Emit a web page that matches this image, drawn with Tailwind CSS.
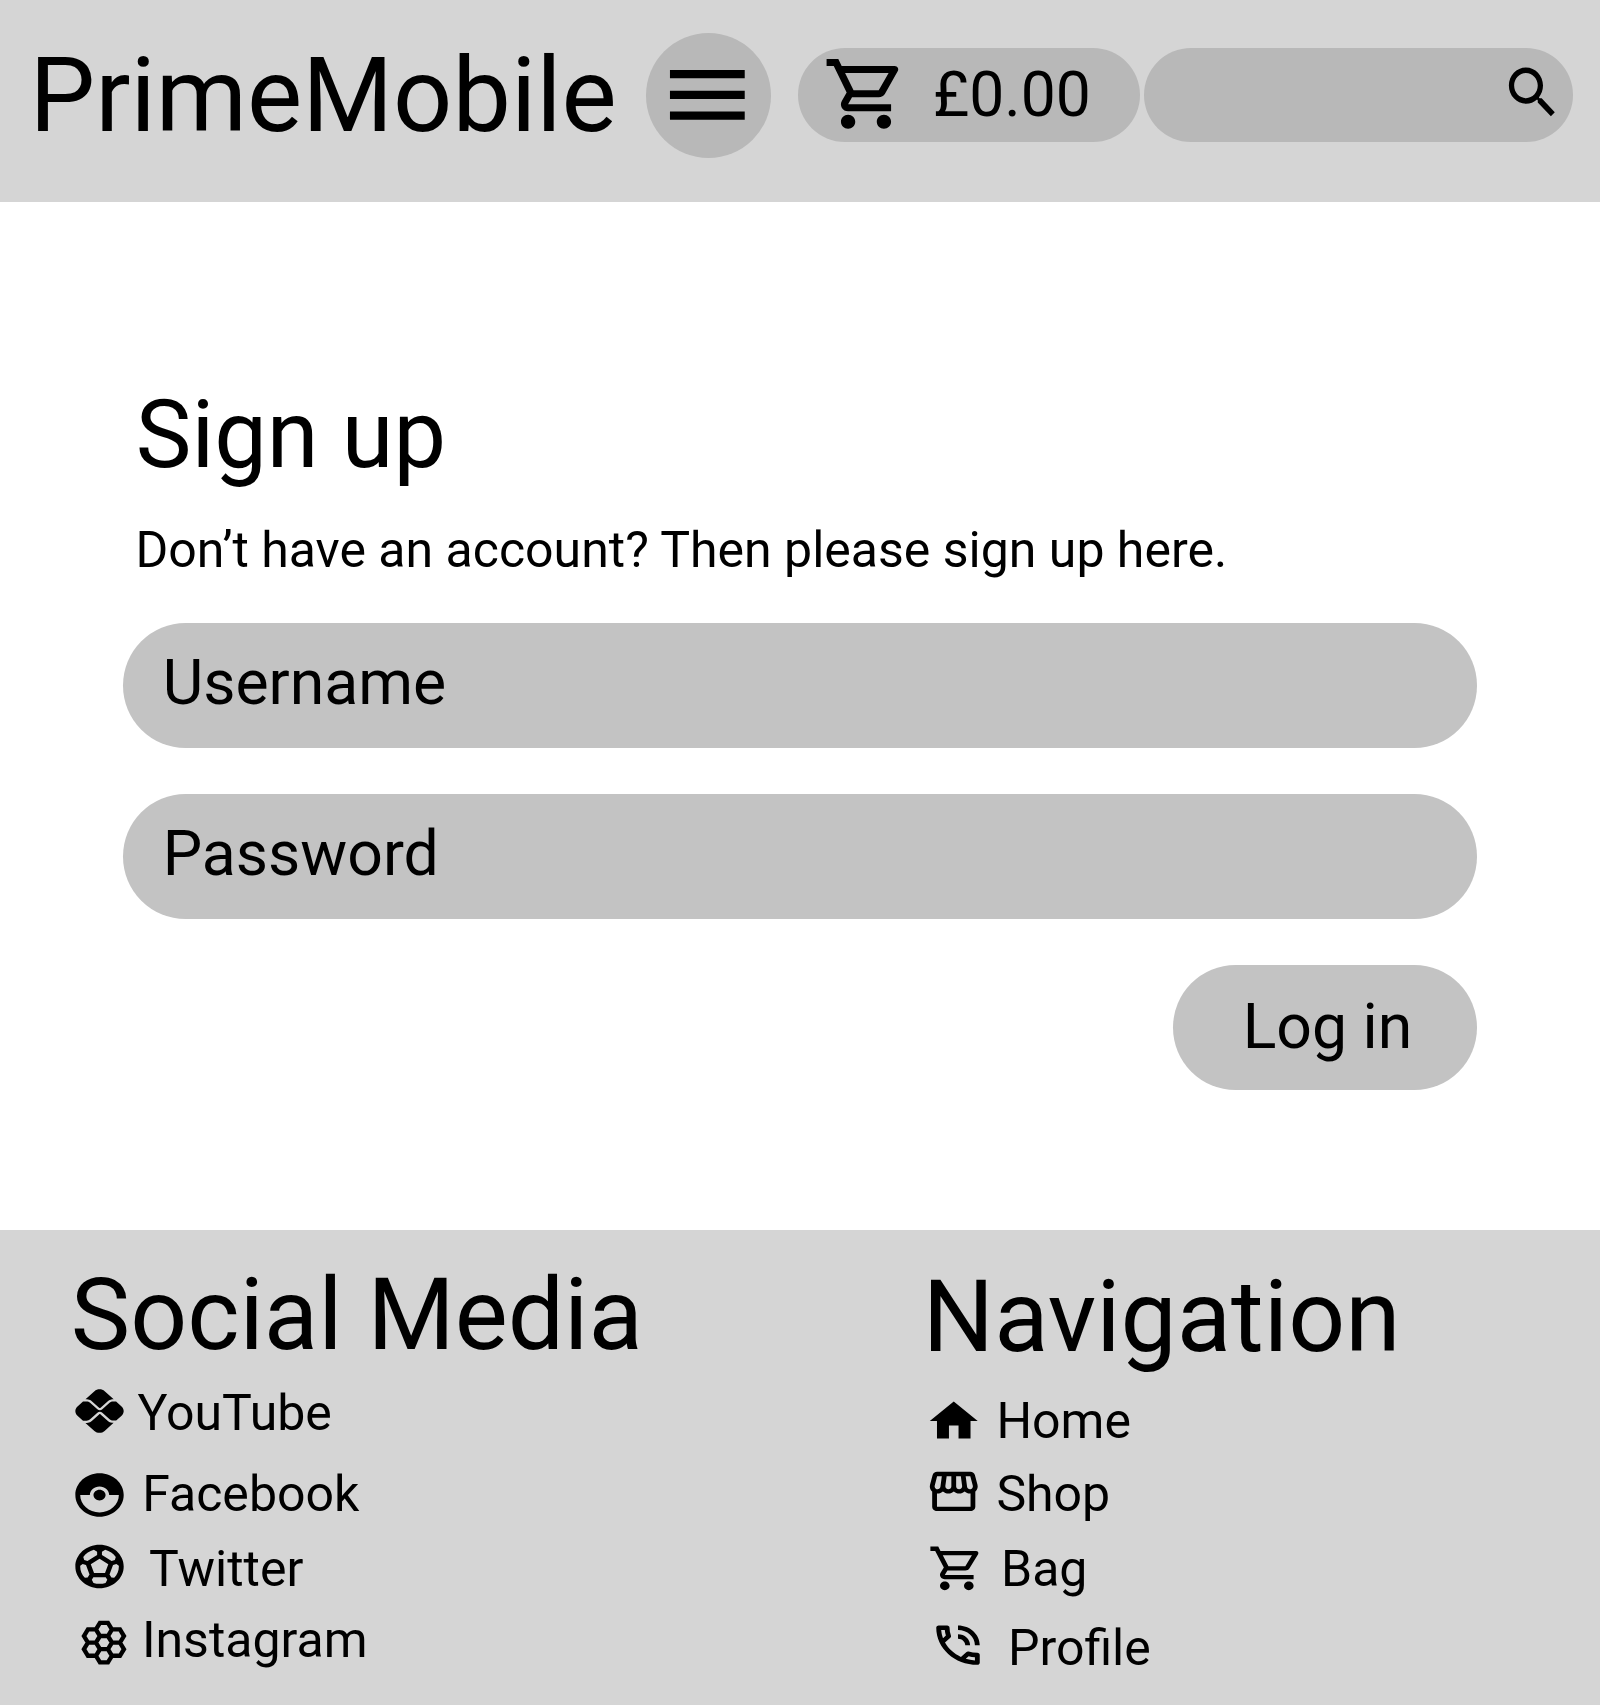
<!DOCTYPE html>
<html lang="en">
<head>
<meta charset="utf-8">
<title>PrimeMobile – Sign up</title>
<script src="https://cdn.jsdelivr.net/npm/@tailwindcss/browser@4"></script>
</head>
<body class="w-[1600px] h-[1705px] overflow-hidden bg-white text-black font-['Roboto',sans-serif] whitespace-nowrap">
<div class="flex flex-col h-full">

  <header class="flex items-start h-[202px] shrink-0 bg-[#d5d5d5]">
    <h1 class="w-[616.5px] ml-[29.5px] mt-[43px] text-[104.1px] leading-none">PrimeMobile</h1>
    <button class="flex items-start w-[125px] h-[125px] mt-[33.3px] pl-[11px] pt-[11.7px] rounded-full bg-[#b8b8b8]" aria-label="Menu">
      <svg class="w-[99.7px] h-[99.7px] shrink-0" viewBox="-0.12 0 24 24"><path d="M3 18h18v-2H3v2zm0-5h18v-2H3v2zm0-7v2h18V6H3z"/></svg>
    </button>
    <a class="flex items-start w-[341.7px] h-[93.7px] ml-[27px] mt-[48px] pl-[25px] rounded-full bg-[#b8b8b8]">
      <svg class="w-[86px] h-[83.7px] mt-[4px] shrink-0" viewBox="0 0 24 24" preserveAspectRatio="none"><path d="M15.55 13c.75 0 1.41-.41 1.75-1.03l3.58-6.49c.37-.66-.11-1.48-.87-1.48H5.21l-.94-2H1v2h2l3.6 7.59-1.35 2.44C4.52 15.37 5.48 17 7 17h12v-2H7l1.1-2h7.45zM6.16 6h12.15l-2.76 5H8.53L6.16 6zM7 18c-1.1 0-1.99.9-1.99 2S5.9 22 7 22s2-.9 2-2-.9-2-2-2zm10 0c-1.1 0-1.99.9-1.99 2s.89 2 1.99 2 2-.9 2-2-.9-2-2-2z"/></svg>
      <span class="ml-[24px] mt-[16px] text-[62.4px] leading-none">£0.00</span>
    </a>
    <div class="flex items-start justify-end w-[429.5px] h-[93.7px] ml-[4px] mt-[48px] pr-[9px] rounded-full bg-[#b8b8b8]">
      <svg class="w-[63px] h-[67.2px] mt-[10.6px]" viewBox="0 0 24 24" preserveAspectRatio="none"><path d="M15.5 14h-.79l-.28-.27C15.41 12.59 16 11.11 16 9.5 16 5.91 13.09 3 9.5 3S3 5.91 3 9.5 5.91 16 9.5 16c1.61 0 3.09-.59 4.23-1.57l.27.28v.79l5 4.99L20.49 19l-4.99-5zm-6 0C7.01 14 5 11.99 5 9.5S7.01 5 9.5 5 14 7.01 14 9.5 11.99 14 9.5 14z"/></svg>
    </div>
  </header>

  <main class="flex flex-col h-[1027.7px] shrink-0 pl-[123px] pr-[123px] pt-[187.3px]">
    <h2 class="h-[135.5px] pl-[12.8px] text-[93.7px] leading-none">Sign up</h2>
    <p class="h-[98.6px] pl-[12.4px] text-[50px] leading-none">Don’t have an account? Then please sign up here.</p>
    <div class="h-[124.8px] pl-[39.7px] pt-[28.6px] rounded-full bg-[#c3c3c3] text-[62.5px] leading-none">Username</div>
    <div class="h-[124.8px] mt-[46.2px] pl-[39.7px] pt-[28.6px] rounded-full bg-[#c3c3c3] text-[62.5px] leading-none">Password</div>
    <div class="self-end w-[304px] h-[125px] mt-[45.8px] pl-[69.7px] pt-[30.6px] rounded-full bg-[#c3c3c3] text-[62.5px] leading-none">Log in</div>
  </main>

  <footer class="flex grow bg-[#d5d5d5]">
    <section class="w-[922.8px] pl-[70px] pt-[35.4px]">
      <h2 class="h-[116.9px] pl-[0.8px] text-[100px] leading-none">Social Media</h2>
      <ul class="text-[50px] leading-none">
        <li class="flex items-start h-[82px]">
          <svg class="w-[58px] h-[52.2px] mt-[3.4px]" viewBox="-0.22 0 24 24" preserveAspectRatio="none"><path d="M15.45 16.52l-3.01-3.01c-.11-.11-.24-.13-.31-.13s-.2.02-.31.13L8.8 16.53c-.34.34-.87.89-2.64.89l3.71 3.7c1.17 1.17 3.07 1.17 4.24 0l3.72-3.71c-.91 0-1.67-.18-2.38-.89zM8.8 7.47l3.02 3.02c.08.08.2.13.31.13s.23-.05.31-.13l2.99-2.99c.71-.74 1.52-.91 2.43-.91l-3.72-3.71c-1.17-1.17-3.07-1.17-4.24 0l-3.71 3.7c1.76 0 2.3.58 2.61.89zM21.11 9.85l-2.25-2.26H17.6c-.54 0-1.08.22-1.45.61l-3 3c-.28.28-.65.42-1.02.42-.36 0-.74-.15-1.02-.42L8.09 8.17c-.38-.38-.9-.6-1.45-.6H5.17L2.88 9.86c-1.17 1.17-1.17 3.07 0 4.24l2.29 2.29h1.48c.54 0 1.06-.22 1.45-.6l3.02-3.02c.28-.28.65-.42 1.02-.42s.74.14 1.02.42l3.01 3.01c.38.38.9.6 1.45.6h1.26l2.25-2.26c1.17-1.16 1.17-3.06-.02-4.24z"/></svg>
          <span class="ml-[9.6px] mt-[6px]">YouTube</span>
        </li>
        <li class="flex items-start h-[74px]">
          <svg class="w-[58px] h-[52.2px] mt-[5.5px]" viewBox="-0.22 0 24 24" preserveAspectRatio="none"><path fill-rule="evenodd" d="M14.5 12c0 1.38-1.12 2.5-2.5 2.5S9.5 13.38 9.5 12s1.12-2.5 2.5-2.5 2.5 1.12 2.5 2.5zm7.5 0c0 5.52-4.48 10-10 10S2 17.52 2 12 6.48 2 12 2s10 4.48 10 10zm-2 0h-4c0-2.21-1.79-4-4-4s-4 1.79-4 4H4c0 4.41 3.59 8 8 8s8-3.59 8-8z"/></svg>
          <span class="ml-[14.2px] mt-[5px]">Facebook</span>
        </li>
        <li class="flex items-start h-[74px]">
          <svg class="w-[58px] h-[52.2px] mt-[2.2px]" viewBox="-0.22 -0.15 24 24" preserveAspectRatio="none"><path fill-rule="evenodd" d="M12 2C6.48 2 2 6.48 2 12s4.48 10 10 10 10-4.48 10-10S17.52 2 12 2zM13 5.3l1.35-.95c1.82.56 3.37 1.76 4.38 3.34l-.39 1.34-1.35.46L13 6.7V5.3zM9.65 4.35L11 5.3v1.4L7.01 9.49l-1.35-.46-.39-1.34c1.01-1.57 2.56-2.77 4.38-3.34zM7.08 17.11l-1.14.1C4.73 15.81 4 13.99 4 12c0-.12.01-.23.02-.35l1-.73 1.38.48 1.46 4.34-.78 1.37zM14.5 19.59c-.79.26-1.63.41-2.5.41s-1.71-.15-2.5-.41l-.69-1.49.64-1.1h5.11l.64 1.11-.7 1.48zM14.27 15H9.73l-1.35-4.02L12 8.44l3.63 2.54L14.27 15zM18.06 17.21l-1.14-.1-.79-1.37 1.46-4.34 1.39-.47 1 .73c.01.11.02.22.02.34 0 1.99-.73 3.81-1.94 5.21z"/></svg>
          <span class="ml-[21px] mt-[6px]">Twitter</span>
        </li>
        <li class="flex items-start h-[74px]">
          <svg class="w-[46.7px] h-[46.7px] ml-[10.2px] mt-[7.5px]" viewBox="60.2 267.2 140 140" fill="none" stroke="#000" stroke-width="13"><path d="M108 338l12-19.75h24L156 338l-12 19.75h-24zM108 298.5l12-19.75h24l12 19.75-12 19.75h-24zM108 377.5l12-19.75h24l12 19.75-12 19.75h-24zM72 318.25l12-19.75h24l12 19.75L108 338H84zM72 357.75L84 338h24l12 19.75-12 19.75H84zM144 318.25l12-19.75h24l12 19.75L180 338h-24zM144 357.75L156 338h24l12 19.75-12 19.75h-24z"/></svg>
          <span class="ml-[15px] mt-[3px]">Instagram</span>
        </li>
      </ul>
    </section>
    <section class="pt-[37px]">
      <h2 class="h-[123.3px] text-[100px] leading-none">Navigation</h2>
      <ul class="text-[50px] leading-none">
        <li class="flex items-start h-[73px]">
          <svg class="w-[57.5px] h-[52.2px] ml-[2.4px] mt-[5.2px]" viewBox="0 0 24 24" preserveAspectRatio="none"><path d="M10 20v-6h4v6h5v-8h3L12 3 2 12h3v8z"/></svg>
          <span class="ml-[13.7px] mt-[6px]">Home</span>
        </li>
        <li class="flex items-start h-[75px]">
          <svg class="w-[57.5px] h-[52.2px] ml-[2.4px] mt-[2.4px]" viewBox="0 -0.15 24 24" preserveAspectRatio="none"><path d="M21.9 8.89l-1.05-4.37c-.22-.9-1-1.52-1.91-1.52H5.05c-.9 0-1.69.63-1.9 1.52L2.1 8.89c-.24 1.02-.02 2.06.62 2.88.08.11.19.19.28.29V19c0 1.1.9 2 2 2h14c1.1 0 2-.9 2-2v-6.94c.09-.09.2-.18.28-.28.64-.82.87-1.87.62-2.89zm-2.99-3.9l1.05 4.37c.1.42.01.84-.25 1.17-.14.18-.44.47-.94.47-.61 0-1.14-.49-1.21-1.14L16.98 5l1.93-.01zM13 5h1.96l.54 4.52c.05.39-.07.78-.33 1.07-.22.26-.54.41-.95.41-.67 0-1.22-.59-1.22-1.31V5zM8.49 9.52L9.04 5H11v4.69c0 .72-.55 1.31-1.29 1.31-.34 0-.65-.15-.89-.41-.25-.29-.37-.68-.33-1.07zm-4.45-.16L5.05 5h1.97l-.58 4.86c-.08.65-.6 1.14-1.21 1.14-.49 0-.8-.29-.93-.47-.27-.32-.36-.75-.26-1.17zM5 19v-6.03c.08.01.15.03.23.03.87 0 1.66-.36 2.24-.95.6.6 1.4.95 2.31.95.87 0 1.65-.36 2.23-.93.59.57 1.39.93 2.29.93.84 0 1.64-.35 2.24-.95.58.59 1.37.95 2.24.95.08 0 .15-.02.23-.03V19H5z"/></svg>
          <span class="ml-[13.7px] mt-[6px]">Shop</span>
        </li>
        <li class="flex items-start h-[77px]">
          <svg class="w-[57.6px] h-[52.3px] ml-[4.8px] mt-[4.5px]" viewBox="0 -0.1 24 24" preserveAspectRatio="none"><path d="M15.55 13c.75 0 1.41-.41 1.75-1.03l3.58-6.49c.37-.66-.11-1.48-.87-1.48H5.21l-.94-2H1v2h2l3.6 7.59-1.35 2.44C4.52 15.37 5.48 17 7 17h12v-2H7l1.1-2h7.45zM6.16 6h12.15l-2.76 5H8.53L6.16 6zM7 18c-1.1 0-1.99.9-1.99 2S5.9 22 7 22s2-.9 2-2-.9-2-2-2zm10 0c-1.1 0-1.99.9-1.99 2s.89 2 1.99 2 2-.9 2-2-.9-2-2-2z"/></svg>
          <span class="ml-[15.8px] mt-[6px]">Bag</span>
        </li>
        <li class="flex items-start h-[74px]">
          <svg class="w-[58px] h-[52.4px] ml-[6.5px] mt-[4.2px]" viewBox="0 0 24 24" preserveAspectRatio="none"><path d="M6.54 5c.06.89.21 1.76.45 2.59l-1.2 1.2c-.41-1.2-.67-2.47-.76-3.79h1.51m9.86 12.02c.85.24 1.72.39 2.6.45v1.49c-1.32-.09-2.59-.35-3.8-.75l1.2-1.19M7.5 3H4c-.55 0-1 .45-1 1 0 9.39 7.61 17 17 17 .55 0 1-.45 1-1v-3.49c0-.55-.45-1-1-1-1.24 0-2.45-.2-3.57-.57-.1-.04-.21-.05-.31-.05-.26 0-.51.1-.71.29l-2.2 2.2c-2.83-1.45-5.15-3.76-6.59-6.59l2.2-2.2c.28-.28.36-.67.25-1.02C8.7 6.45 8.5 5.25 8.5 4c0-.55-.45-1-1-1z" fill-rule="evenodd"/><path d="M15 12h2c0-2.76-2.24-5-5-5v2c1.66 0 3 1.34 3 3zm4 0h2c0-4.97-4.03-9-9-9v2c3.87 0 7 3.13 7 7z"/></svg>
          <span class="ml-[20.6px] mt-[8px]">Profile</span>
        </li>
      </ul>
    </section>
  </footer>
</div>
</body>
</html>
